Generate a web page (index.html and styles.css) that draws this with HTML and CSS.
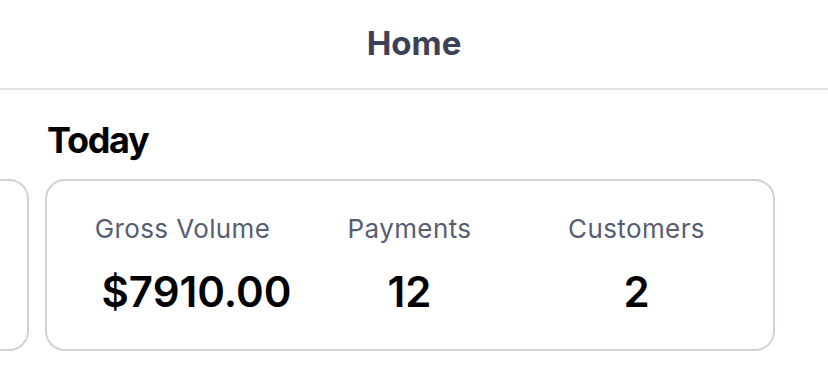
FILE: index.html
```html
<!DOCTYPE html>
<html>
<head>
<meta charset="utf-8">
<link rel="stylesheet" href="styles.css">
</head>
<body>
<header class="topbar"><h1 class="title">Home</h1></header>
<main class="content">
  <h2 class="section-title">Today</h2>
  <div class="cards">
    <div class="card card-prev"></div>
    <div class="card">
      <div class="stat">
        <div class="stat-label">Gross Volume</div>
        <div class="stat-value stat-value-money">$7910.00</div>
      </div>
      <div class="stat">
        <div class="stat-label">Payments</div>
        <div class="stat-value">12</div>
      </div>
      <div class="stat">
        <div class="stat-label">Customers</div>
        <div class="stat-value">2</div>
      </div>
    </div>
  </div>
</main>
</body>
</html>
```
FILE: styles.css
```css
* { box-sizing: border-box; }
html, body { margin: 0; padding: 0; background: #ffffff; }
body { font-family: Inter, "Liberation Sans", sans-serif; width: 828px; height: 381px; overflow: hidden; }
.topbar {
  height: 90px;
  border-bottom: 2px solid #e4e4e6;
  display: flex;
  align-items: center;
  justify-content: center;
  padding-bottom: 2px;
}
.title {
  margin: 0;
  font-size: 33px;
  font-weight: 700;
  color: #3d4157;
  line-height: 40px;
}
.content { padding-top: 28px; }
.section-title {
  margin: 0 0 0 47px;
  font-size: 36px;
  font-weight: 700;
  letter-spacing: -1.3px;
  color: #000;
  line-height: 44px;
}
.cards {
  display: flex;
  gap: 16px;
  padding-left: 45px;
  margin-top: 17px;
}
.card {
  flex: 0 0 730px;
  height: 172px;
  border: 2px solid #cfd3d9;
  border-radius: 20px;
  display: grid;
  grid-template-columns: repeat(3, 227px);
  padding: 30px 0 0 22px;
}
.card-prev { margin-left: -746px; }
.stat { display: flex; flex-direction: column; align-items: center; }
.stat-label {
  font-size: 26px;
  letter-spacing: 0.4px;
  color: #585e72;
  line-height: 36px;
}
.stat-value {
  font-size: 42px;
  font-weight: 600;
  color: #000;
  line-height: 50px;
  margin-top: 20px;
}
.stat-value-money { padding-left: 28px; }
```
